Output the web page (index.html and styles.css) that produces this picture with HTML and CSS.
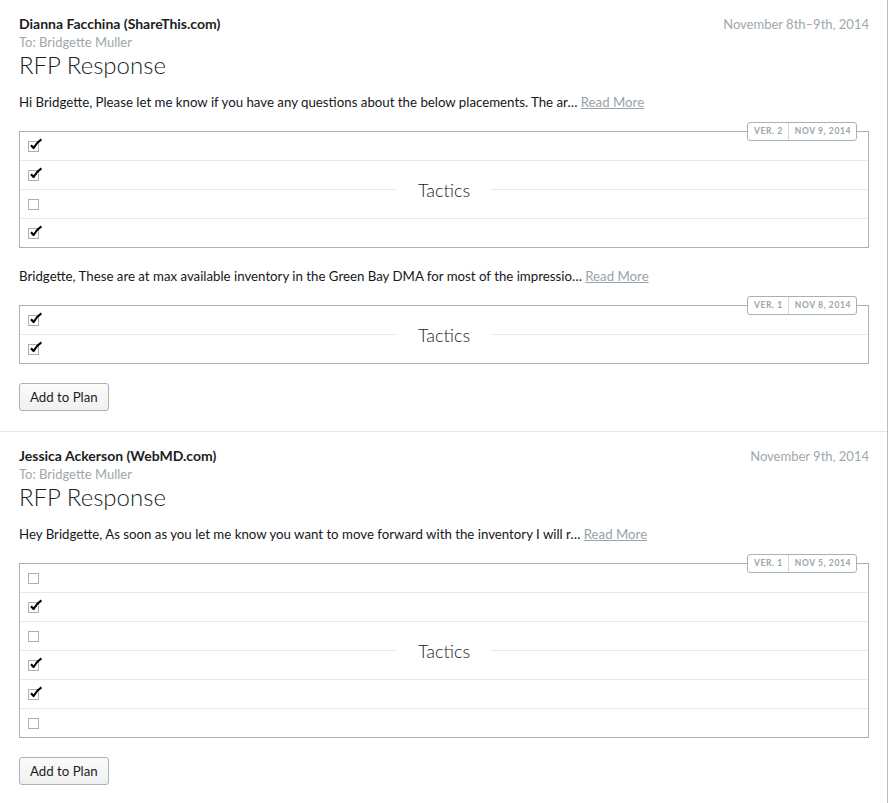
FILE: index.html
```html
<!DOCTYPE html>
<html>
<head>
<meta charset="utf-8">
<link rel="stylesheet" href="styles.css">
</head>
<body>
<div class="page">
  <section class="thread">
    <div class="head">
      <div class="from">Dianna Facchina (ShareThis.com)</div>
      <div class="date">November 8th–9th, 2014</div>
    </div>
    <div class="to">To: Bridgette Muller</div>
    <h1 class="title">RFP Response</h1>
    <p class="msg">Hi Bridgette, Please let me know if you have any questions about the below placements. The ar… <a class="more">Read More</a></p>
    <div class="box">
      <div class="badge"><span>VER. 2</span><span>NOV 9, 2014</span></div>
      <div class="row"><span class="cb on"></span></div>
      <div class="row"><span class="cb on"></span></div>
      <div class="row"><span class="cb"></span></div>
      <div class="row"><span class="cb on"></span></div>
      <div class="label">Tactics</div>
    </div>
    <p class="msg">Bridgette, These are at max available inventory in the Green Bay DMA for most of the impressio… <a class="more">Read More</a></p>
    <div class="box">
      <div class="badge"><span>VER. 1</span><span>NOV 8, 2014</span></div>
      <div class="row"><span class="cb on"></span></div>
      <div class="row"><span class="cb on"></span></div>
      <div class="label">Tactics</div>
    </div>
    <button class="btn">Add to Plan</button>
  </section>
  <section class="thread">
    <div class="head">
      <div class="from">Jessica Ackerson (WebMD.com)</div>
      <div class="date">November 9th, 2014</div>
    </div>
    <div class="to">To: Bridgette Muller</div>
    <h1 class="title">RFP Response</h1>
    <p class="msg">Hey Bridgette, As soon as you let me know you want to move forward with the inventory I will r… <a class="more">Read More</a></p>
    <div class="box">
      <div class="badge"><span>VER. 1</span><span>NOV 5, 2014</span></div>
      <div class="row"><span class="cb"></span></div>
      <div class="row"><span class="cb on"></span></div>
      <div class="row"><span class="cb"></span></div>
      <div class="row"><span class="cb on"></span></div>
      <div class="row"><span class="cb on"></span></div>
      <div class="row"><span class="cb"></span></div>
      <div class="label">Tactics</div>
    </div>
    <button class="btn">Add to Plan</button>
  </section>
</div>
</body>
</html>
```
FILE: styles.css
```css
html, body { margin: 0; padding: 0; background: #fff; }
body {
  font-family: Lato, "Open Sans", sans-serif;
  font-size: 13px;
  color: #1b1d22;
}
.page {
  width: 887px;
  border-right: 1px solid #b9c0c4;
  min-height: 803px;
}
.thread {
  padding: 15px 18px 20px 19px;
  border-bottom: 1px solid #e3e6e8;
}
.head { display: flex; justify-content: space-between; line-height: 18px; }
.from { font-weight: 700; font-size: 14px; }
.date { color: #9ea8ae; }
.to { color: #9ea8ae; line-height: 18px; }
.title {
  margin: -1px 0 0;
  font-size: 24px;
  font-weight: 300;
  line-height: 30px;
}
.msg { margin: 13px 0 20px; line-height: 18px; white-space: nowrap; font-size: 13.25px; color: #15171b; }
.more { color: #98a3a9; text-decoration: underline; }
.box {
  position: relative;
  border: 1px solid #a7b2b8;
  margin-bottom: 19px;
}
.row {
  height: 28px;
  display: flex;
  align-items: center;
  padding-left: 8px;
}
.row + .row { border-top: 1px solid #e5e8ea; }
.cb {
  width: 9px; height: 9px;
  border: 1px solid #a7b2b8;
  position: relative;
}
.cb.on::after {
  content: "";
  position: absolute;
  left: 1px; top: -4px;
  width: 12px; height: 12px;
  background: no-repeat center/contain url("data:image/svg+xml;utf8,<svg xmlns='http://www.w3.org/2000/svg' viewBox='0 0 12 12'><path d='M1 7.2 L3.6 10 Q6.6 4.6 11.4 1.4' fill='none' stroke='black' stroke-width='2.2' stroke-linejoin='round'/></svg>");
}
.label {
  position: absolute;
  left: 50%; top: 50%;
  transform: translate(-50%, -50%);
  background: #fff;
  padding: 0 21px;
  font-size: 18px;
  font-weight: 300;
  line-height: 24px;
  color: #141a30;
}
.badge {
  position: absolute;
  right: 11px; top: -10px;
  display: flex;
  height: 17px;
  border: 1px solid #a7b2b8;
  border-radius: 3px;
  background: #fff;
  font-size: 8.5px;
  font-weight: 700;
  letter-spacing: 0.6px;
  color: #9aa5ab;
  line-height: 17px;
}
.badge span { padding: 0 5px 0 6px; }
.badge span + span { border-left: 1px solid #d3d9dc; }
.btn {
  font-family: inherit;
  font-size: 13.25px;
  color: #1b1d22;
  height: 28px;
  padding: 0 10px;
  border: 1px solid #aab2b7;
  border-radius: 3px;
  background: linear-gradient(#fbfbfb, #f0f0f0);
  display: block;
}
```
